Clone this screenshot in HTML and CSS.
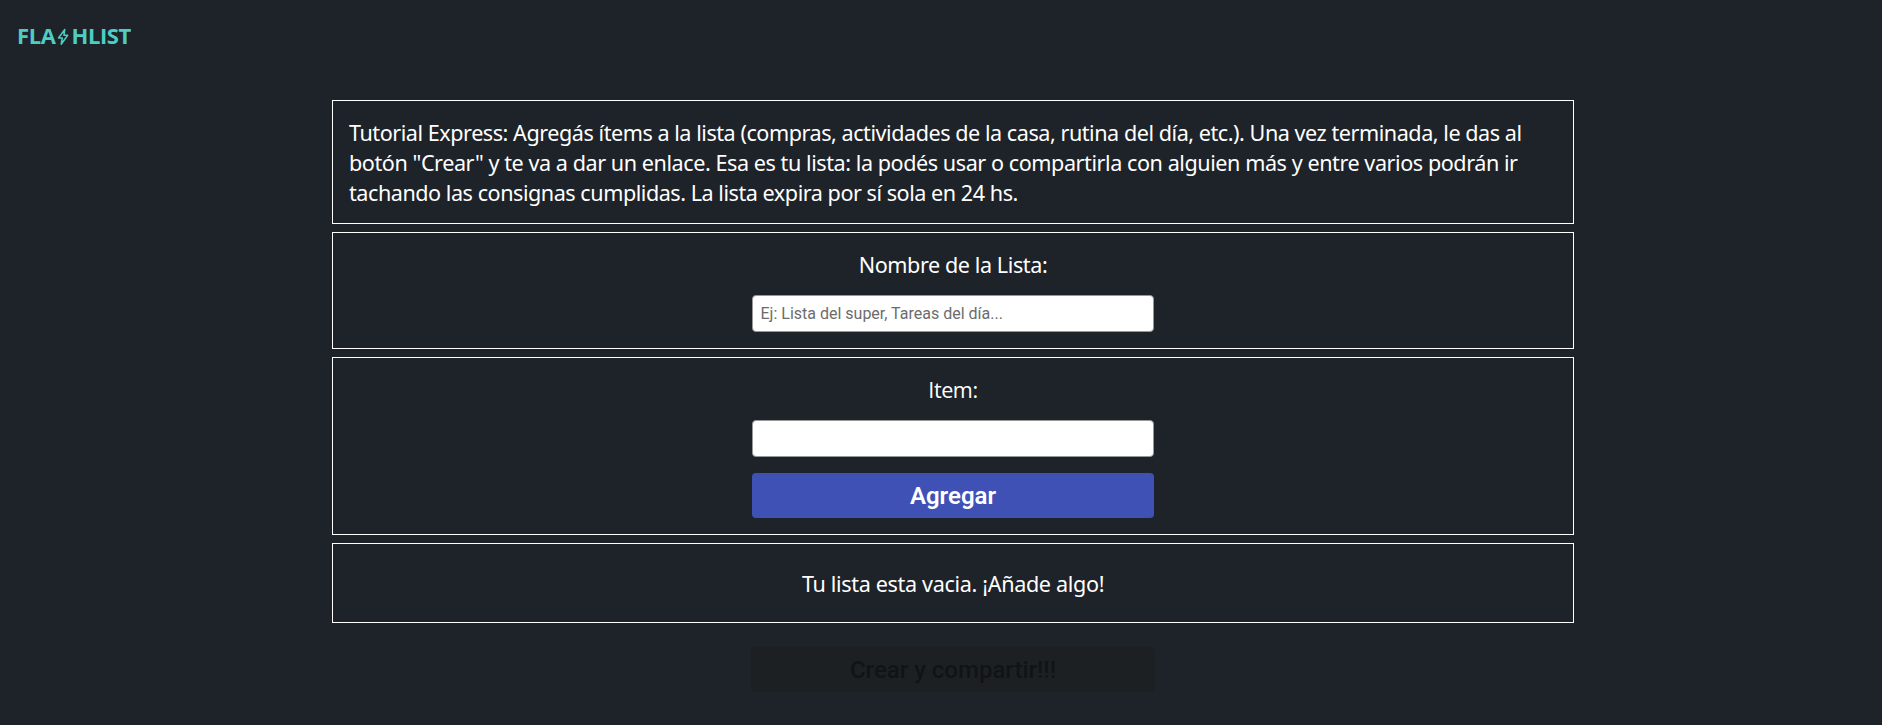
FILE: index.html
```html
<!DOCTYPE html>
<html lang="es">
<head>
<meta charset="utf-8">
<title>Flashlist</title>
<link rel="stylesheet" href="styles.css">
</head>
<body>
<header class="header">
  <a class="logo"><span class="logo-start">FLA</span><svg class="bolt" viewBox="0 0 12 18" aria-hidden="true"><path d="M7.8 1.5 L1.5 10 H5.3 L4.2 16.2 L10.7 7.3 H6.9 Z"/></svg><span class="logo-end">HLIST</span></a>
</header>
<main class="main">
  <section class="card tutorial">
    <span class="line line-1">Tutorial Express: Agregás ítems a la lista (compras, actividades de la casa, rutina del día, etc.). Una vez terminada, le das al</span>
    <span class="line line-2">botón "Crear" y te va a dar un enlace. Esa es tu lista: la podés usar o compartirla con alguien más y entre varios podrán ir</span>
    <span class="line line-3">tachando las consignas cumplidas. La lista expira por sí sola en 24 hs.</span>
  </section>
  <section class="card form">
    <label class="label" for="name">Nombre de la Lista:</label>
    <input class="input" id="name" placeholder="Ej: Lista del super, Tareas del día...">
  </section>
  <section class="card form">
    <label class="label label-item" for="item">Item:</label>
    <input class="input" id="item">
    <button class="button add">Agregar</button>
  </section>
  <section class="card empty"><span class="empty-text">Tu lista esta vacia. ¡Añade algo!</span></section>
  <button class="button create" disabled>Crear y compartir!!!</button>
</main>
</body>
</html>
```
FILE: styles.css
```css
* { box-sizing: border-box; }
body {
  margin: 0;
  min-height: 725px;
  background: #1e2329;
  color: #fff;
  font: 21.6px/30px "Segoe UI", "Noto Sans", sans-serif;
}
.header { height: 100px; padding: 20px 0 0 17px; }
.logo {
  display: inline-flex;
  align-items: center;
  color: #4ecdc4;
  font: 700 22px/30px "Segoe UI", "Open Sans", sans-serif;
}
.logo-start { letter-spacing: -0.4px; }
.logo-end { letter-spacing: -0.4px; }
.bolt {
  width: 12px;
  height: 18px;
  margin: 3px 2px 0 2px;
  fill: none;
  stroke: currentColor;
  stroke-width: 1.5;
  stroke-linejoin: round;
}
.main {
  display: flex;
  flex-direction: column;
  align-items: center;
  gap: 8px;
  width: 1242px;
  margin-left: 332px;
}
.card { width: 100%; padding: 17px 16px 15px; border: 1px solid #fff; }
.line { display: block; white-space: nowrap; }
.line-1 { letter-spacing: -0.46px; }
.line-2 { letter-spacing: -0.44px; }
.line-3 { letter-spacing: -0.465px; }
.form {
  display: flex;
  flex-direction: column;
  align-items: center;
  gap: 16px;
  padding-bottom: 16px;
}
.label { margin-bottom: -1px; letter-spacing: -0.42px; }
.label-item { font-family: "Segoe UI", "Open Sans", sans-serif; }
.input {
  width: 402px;
  height: 37px;
  padding: 7px 7.5px;
  border: 1px solid #979797;
  border-radius: 4px;
  background: #fff;
  font: 16px Roboto, sans-serif;
}
.input::placeholder { color: #6c6c6c; opacity: 1; }
.button {
  width: 402px;
  height: 45px;
  padding: 0;
  border: 0;
  border-radius: 4px;
  background: #3f51b5;
  color: #fff;
  font: 500 24px Roboto, sans-serif;
}
.add { font-weight: 600; }
.empty { display: flex; align-items: center; justify-content: center; height: 80px; }
.empty-text { letter-spacing: -0.34px; }
.create { width: 404px; margin-top: 16px; background: #1c2023; color: #101417; }
```
